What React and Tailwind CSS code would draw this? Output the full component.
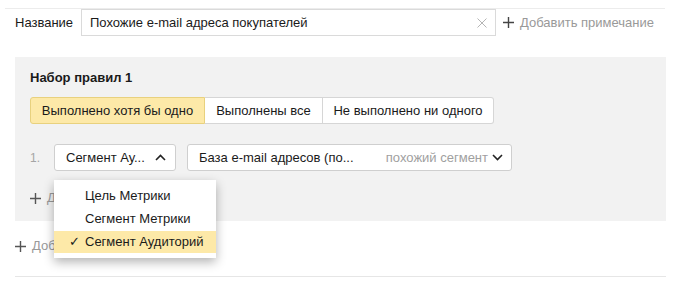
import React from "react";

const Chevron = ({ up }) => (
  <svg width="11" height="7" viewBox="0 0 11 7" className="shrink-0">
    <path
      d={up ? "M1 6 L5.5 1.5 L10 6" : "M1 1 L5.5 5.5 L10 1"}
      fill="none"
      stroke="#222"
      strokeWidth="1.6"
    />
  </svg>
);

const Plus = ({ color = "#555" }) => (
  <svg width="11" height="11" viewBox="0 0 11 11" className="shrink-0">
    <path d="M5.5 0 V11 M0 5.5 H11" stroke={color} strokeWidth="1.4" />
  </svg>
);

export default function App() {
  return (
    <div
      className="relative w-[680px] h-[286px] bg-white text-[13px] leading-[16px] text-[#1a1a1a] overflow-hidden whitespace-nowrap"
      style={{ fontFamily: '"Liberation Sans", Arial, sans-serif' }}
    >
      <div className="pt-[8px]">
        <div className="ml-[5px] w-[660px] border-t border-[#ececec]" />
        <div className="flex items-center pl-[15px]">
          <div className="w-[66px]">Название</div>
          <div className="w-[415px] h-[27px] border border-[#dadada] flex items-center justify-between pl-[8px] pr-[8px]">
            <span>Похожие e-mail адреса покупателей</span>
            <svg width="10" height="10" viewBox="0 0 10 10">
              <path d="M0.5 0.5 L9.5 9.5 M9.5 0.5 L0.5 9.5" stroke="#b5b5b5" strokeWidth="1" />
            </svg>
          </div>
          <div className="flex items-center ml-[7px] gap-[6px] text-[#999]">
            <Plus color="#444" />
            <span>Добавить примечание</span>
          </div>
        </div>
      </div>

      <div className="ml-[15px] mt-[21px] w-[651px] h-[164px] bg-[#f2f2f2] pl-[15px] pt-[13px]">
        <div className="font-bold">Набор правил 1</div>
        <div className="flex mt-[11px] h-[27px]">
          <div className="flex items-center justify-center bg-[#fde9a8] border border-[#e8d17e] rounded-l-[3px] w-[175px]">
            Выполнено хотя бы одно
          </div>
          <div className="flex items-center justify-center bg-white border-y border-r border-[#d6d6d6] w-[118px]">
            Выполнены все
          </div>
          <div className="flex items-center justify-center bg-white border-y border-r border-[#d6d6d6] rounded-r-[3px] w-[171px]">
            Не выполнено ни одного
          </div>
        </div>
        <div className="flex items-center mt-[20px]">
          <div className="w-[24px] text-[#a5a5a5] text-[12px]">1.</div>
          <div className="w-[122px] h-[27px] bg-white border border-[#cfcfcf] rounded-[3px] flex items-center justify-between pl-[11px] pr-[9px]">
            <span>Сегмент Ау...</span>
            <Chevron up />
          </div>
          <div className="ml-[11px] w-[325px] h-[27px] bg-white border border-[#cfcfcf] rounded-[3px] flex items-center pl-[11px] pr-[8px]">
            <span className="flex-1">База e-mail адресов (по...</span>
            <span className="text-[#a0a0a0] mr-[4px]">похожий сегмент</span>
            <Chevron />
          </div>
        </div>
        <div className="flex items-center mt-[19px] gap-[6px] text-[#999]">
          <Plus color="#555" />
          <span>Добавить условие</span>
        </div>
      </div>

      <div className="flex items-center ml-[15px] mt-[17px] gap-[6px] text-[#999]">
        <Plus color="#555" />
        <span>Добавить набор правил</span>
      </div>

      <div className="ml-[15px] mt-[22px] w-[651px] border-t border-[#e6e6e6]" />

      <div className="absolute left-[54px] top-[180px] w-[162px] bg-white pt-[4px] pb-[5px] shadow-[0_4px_10px_rgba(0,0,0,0.3)]">
        <div className="h-[23px] flex items-center pl-[31px]">Цель Метрики</div>
        <div className="h-[23px] flex items-center pl-[31px]">Сегмент Метрики</div>
        <div className="h-[22px] mt-[1px] flex items-center pl-[15px] bg-[#fde9a8]">
          <span className="w-[16px]">✓</span>
          <span>Сегмент Аудиторий</span>
        </div>
      </div>
    </div>
  );
}
